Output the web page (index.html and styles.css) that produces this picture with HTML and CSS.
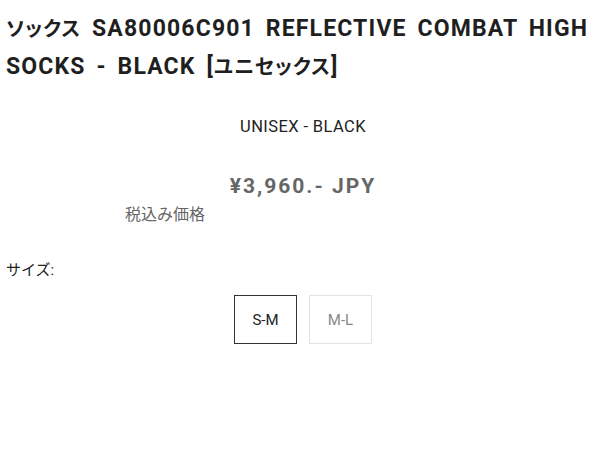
FILE: index.html
```html
<!DOCTYPE html>
<html lang="ja">
<head>
<meta charset="utf-8">
<link rel="stylesheet" href="styles.css">
</head>
<body>
<div class="page">
  <h1 class="title"><span class="ja">ソックス</span> SA80006C901 REFLECTIVE COMBAT HIGH SOCKS - BLACK [<span class="ja">ユニセックス</span>]</h1>
  <p class="variant">UNISEX - BLACK</p>
  <p class="price">¥3,960.- JPY</p>
  <p class="tax">税込み価格</p>
  <p class="size-label">サイズ:</p>
  <div class="sizes">
    <span class="size size-active">S-M</span>
    <span class="size size-off">M-L</span>
  </div>
</div>
</body>
</html>
```
FILE: styles.css
```css
html, body {
  margin: 0;
  padding: 0;
  background: #fff;
}
.page {
  width: 600px;
  font-family: Roboto, "Noto Sans CJK JP", sans-serif;
  color: #222;
  padding: 10px 0 0 6px;
  box-sizing: border-box;
}
.title {
  margin: 0;
  font-size: 23px;
  font-weight: 700;
  line-height: 38px;
  letter-spacing: 1.15px;
  word-spacing: 4px;
  color: #1f1f1f;
}
.ja {
  font-size: 20px;
  line-height: 1;
  font-feature-settings: "palt";
  letter-spacing: 1px;
}
.variant {
  margin: 31px 0 0;
  text-align: center;
  font-size: 16.5px;
  line-height: 20px;
  letter-spacing: 0.4px;
  color: #222;
}
.price {
  margin: 36px 0 0;
  text-align: center;
  font-size: 21px;
  font-weight: 700;
  line-height: 26px;
  letter-spacing: 2px;
  color: #666;
}
.tax {
  margin: 6px 0 0 119px;
  font-size: 16px;
  line-height: 20px;
  color: #666;
}
.size-label {
  margin: 35px 0 0;
  font-size: 15px;
  line-height: 20px;
  color: #222;
}
.sizes {
  display: flex;
  justify-content: center;
  gap: 12px;
  margin: 15px 0 0;
}
.size {
  box-sizing: border-box;
  width: 63px;
  height: 49px;
  display: flex;
  align-items: center;
  justify-content: center;
  font-size: 15px;
}
.size-active {
  border: 1px solid #333;
  color: #222;
}
.size-off {
  border: 1px solid #e3e3e3;
  color: #888;
}
```
